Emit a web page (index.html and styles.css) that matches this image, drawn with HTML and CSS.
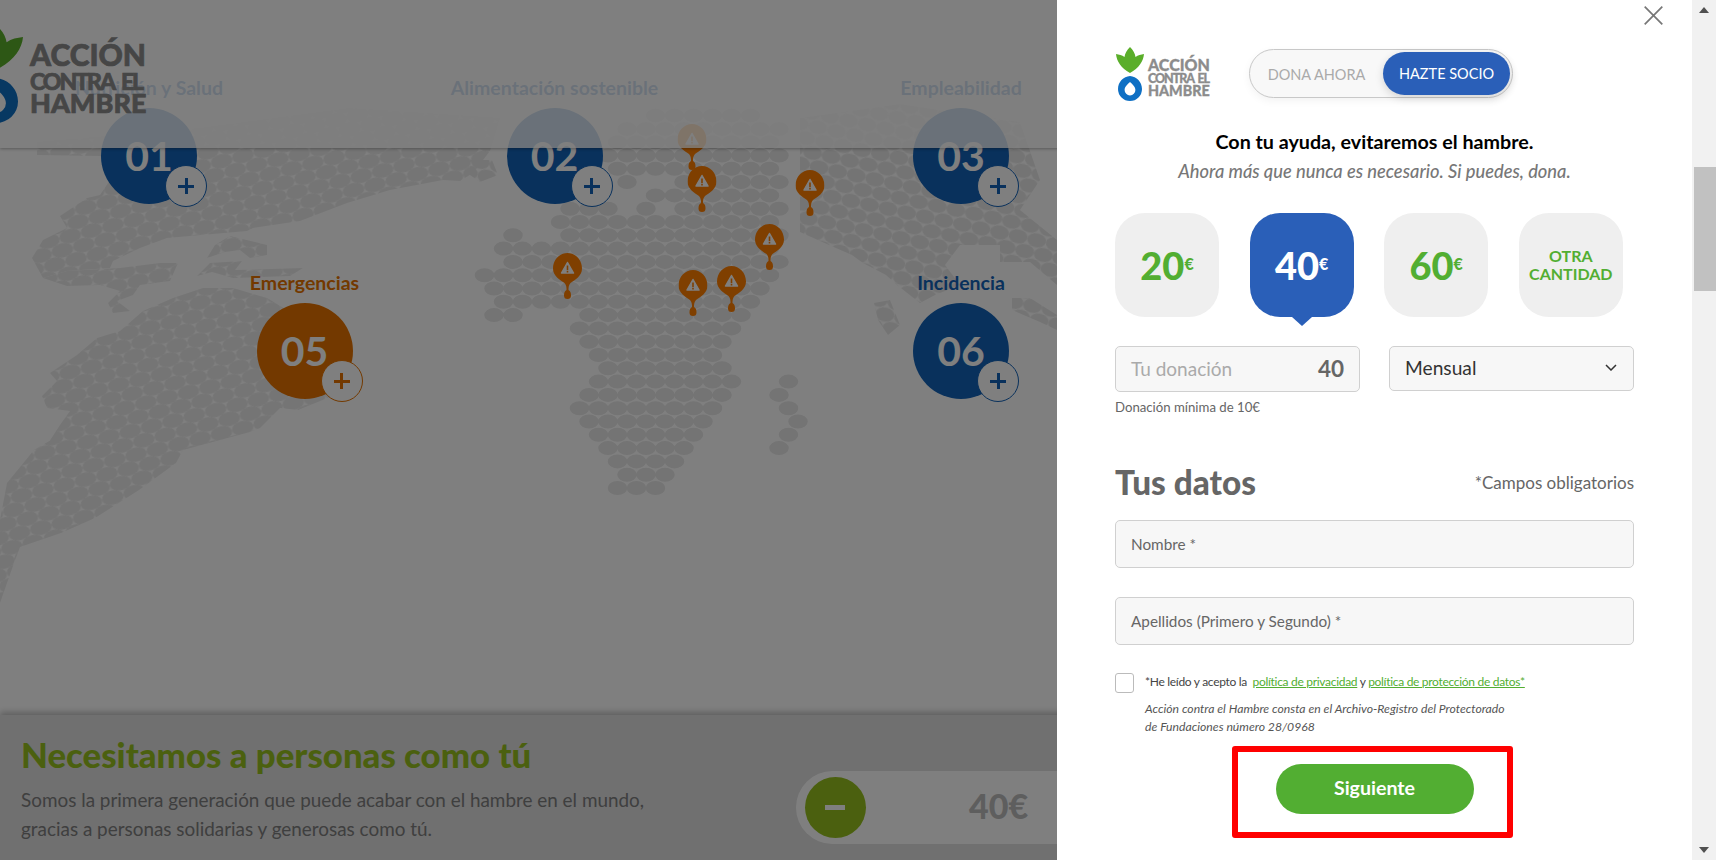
FILE: index.html
```html
<!DOCTYPE html>
<html lang="es">
<head>
<meta charset="utf-8">
<title>Acción contra el Hambre</title>
<link rel="stylesheet" href="styles.css">
</head>
<body>
<svg class="sprites" width="0" height="0" aria-hidden="true">
  <symbol id="leaf" viewBox="0 0 28 26" preserveAspectRatio="none">
    <path d="M14 0C17 3 19 6 19.500 10C22 8 25 7.500 28 7C27.500 14 23 21 14 26C5 21 .5 14 0 7C3 7.500 6 8 8.500 10C9 6 11 3 14 0Z"/>
  </symbol>
  <symbol id="ring" viewBox="0 0 24 25" preserveAspectRatio="none">
    <path fill-rule="evenodd" d="M12 0C18.600 .5 24 6 24 13A12 12 0 0 1 0 13C0 6 5.400 .5 12 0ZM12 6C10 8 6.600 10.500 6.600 14A5.400 5.400 0 0 0 17.400 14C17.400 10.500 14 8 12 6Z"/>
  </symbol>
  <symbol id="pin" viewBox="0 0 29 46">
    <path class="pin-body" d="M14.500 0C6.500 0 0 7 0 15.500C0 23 7 27 11.500 30C13.500 32 13.500 35 13.500 37C11.500 38 11 40 11 42.500A3.500 3.500 0 0 0 18 42.500C18 40 17.500 38 15.500 37C15.500 35 15.500 32 17.500 30C22 27 29 23 29 15.500C29 7 22.500 0 14.500 0Z"/>
    <path class="pin-mark" d="M14.500 9.500L20.500 20H8.500Z"/>
    <path class="pin-bang" d="M13.700 12.500H15.300V17H13.700ZM13.700 17.800H15.300V19.400H13.700Z"/>
  </symbol>
</svg>

<div class="page">
  <svg class="map" viewBox="0 0 1057 715" aria-hidden="true">
    <defs>
      <pattern id="dots-l" width="22" height="24" patternUnits="userSpaceOnUse" patternTransform="rotate(-14)">
        <ellipse cx="11" cy="6" rx="11" ry="7"/>
        <ellipse cx="11" cy="30" rx="11" ry="7"/>
        <ellipse cx="0" cy="18" rx="11" ry="7"/>
        <ellipse cx="22" cy="18" rx="11" ry="7"/>
        <ellipse cx="0" cy="-6" rx="11" ry="7"/>
        <ellipse cx="22" cy="-6" rx="11" ry="7"/>
      </pattern>
      <pattern id="dots-r" width="19" height="26" patternUnits="userSpaceOnUse" patternTransform="rotate(12)">
        <ellipse cx="9.500" cy="6.500" rx="9.500" ry="7"/>
        <ellipse cx="9.500" cy="32.500" rx="9.500" ry="7"/>
        <ellipse cx="0" cy="19.500" rx="9.500" ry="7"/>
        <ellipse cx="19" cy="19.500" rx="9.500" ry="7"/>
        <ellipse cx="0" cy="-6.500" rx="9.500" ry="7"/>
        <ellipse cx="19" cy="-6.500" rx="9.500" ry="7"/>
      </pattern>
    </defs>
    <g class="land-l">
      <polygon points="37,142 200,128 350,108 500,118 490,151 473,173 460,181 443,180 390,190 347,203 300,221 253,228 247,231 167,238 140,248 113,261 110,268 67,271 43,278 32,258 43,240 67,228 60,216 87,198 100,195 120,165 100,156 37,155"/>
      <polygon points="43,278 67,271 120,268 160,263 178,263 170,281 140,285 133,295 117,301 130,311 113,313 108,303 120,291 100,285 67,286"/>
      <polygon points="207,258 215,245 230,236 267,245 267,255 250,258 240,250 225,252"/>
      <polygon points="197,276 210,263 242,261 235,270 303,268 290,276 233,278 212,272"/>
      <polygon points="203,288 233,288 267,298 320,330 335,395 298,410 280,408 260,428 250,432 183,450 176,463 139,490 95,518 61,533 20,547 14,563 0,603 0,520 7,483 34,450 68,430 47,445 60,425 70,411 47,408 42,396 57,381 50,373 77,355 97,338 120,331 143,311 173,298"/>
    </g>
    <g class="land-c">
      <path transform="translate(0 115.600) scale(1 .72)" d="M655.500 0H769.500"/>
      <path transform="translate(0 129) scale(1 .72)" d="M627 0H798"/>
      <path transform="translate(0 142.200) scale(1 .72)" d="M617.500 0H788.500"/>
      <path transform="translate(0 155.500) scale(1 .72)" d="M608 0H798"/>
      <path transform="translate(0 168.800) scale(1 .72)" d="M617.500 0H788.500"/>
      <path transform="translate(0 182) scale(1 .72)" d="M627 0H646M684 0H798"/>
      <path transform="translate(0 195.400) scale(1 .72)" d="M655.500 0H788.500"/>
      <path transform="translate(0 208.700) scale(1 .72)" d="M570 0H627M646 0H647M684 0H798"/>
      <path transform="translate(0 222) scale(1 .72)" d="M560.500 0H788.500"/>
      <path transform="translate(0 235.300) scale(1 .72)" d="M513 0H532M570 0H798"/>
      <path transform="translate(0 248.600) scale(1 .72)" d="M503.500 0H788.500"/>
      <path transform="translate(0 261.900) scale(1 .72)" d="M513 0H798"/>
      <path transform="translate(0 275.200) scale(1 .72)" d="M484.500 0H788.500"/>
      <path transform="translate(0 288.500) scale(1 .72)" d="M494 0H779"/>
      <path transform="translate(0 301.800) scale(1 .72)" d="M503.500 0H769.500"/>
      <path transform="translate(0 315.100) scale(1 .72)" d="M494 0H532M589 0H760"/>
      <path transform="translate(0 328.400) scale(1 .72)" d="M579.500 0H750.500"/>
      <path transform="translate(0 341.700) scale(1 .72)" d="M589 0H741"/>
      <path transform="translate(0 355) scale(1 .72)" d="M598.500 0H731.500"/>
      <path transform="translate(0 368.300) scale(1 .72)" d="M608 0H741"/>
      <path transform="translate(0 381.600) scale(1 .72)" d="M598.500 0H750.500M788.500 0H789"/>
      <path transform="translate(0 394.900) scale(1 .72)" d="M589 0H741M779 0H798"/>
      <path transform="translate(0 408.200) scale(1 .72)" d="M579.500 0H731.500M788.500 0H807.500"/>
      <path transform="translate(0 421.500) scale(1 .72)" d="M589 0H722M798 0H799"/>
      <path transform="translate(0 434.800) scale(1 .72)" d="M598.500 0H712.500M788.500 0H789"/>
      <path transform="translate(0 448.100) scale(1 .72)" d="M608 0H703M779 0H798"/>
      <path transform="translate(0 461.400) scale(1 .72)" d="M617.500 0H693.500"/>
      <path transform="translate(0 474.700) scale(1 .72)" d="M627 0H684"/>
      <path transform="translate(0 488) scale(1 .72)" d="M617.500 0H674.500"/>
    </g>
    <g class="land-r">
      <polygon points="800,118 900,104 1020,122 1040,180 1020,210 1057,240 1057,285 1030,262 1000,262 1000,245 960,245 945,265 960,285 935,295 920,303 897,285 886,275 863,263 852,255 829,245 800,232"/>
      <polygon points="874,303 890,300 900,325 888,335 878,320"/>
      <polygon points="1012,298 1030,298 1057,315 1057,330 1040,322 1012,310"/>
      <polygon points="470,160 492,160 498,175 480,182 470,175"/>
    </g>
    <g class="pins">
      <use href="#pin" x="677.500" y="124" width="29" height="46"/>
      <use href="#pin" x="687.500" y="166" width="29" height="46"/>
      <use href="#pin" x="795.500" y="170" width="29" height="46"/>
      <use href="#pin" x="755" y="224" width="29" height="46"/>
      <use href="#pin" x="553" y="253" width="29" height="46"/>
      <use href="#pin" x="678.500" y="270" width="29" height="46"/>
      <use href="#pin" x="717" y="266" width="29" height="46"/>
    </g>
  </svg>

  <div class="node node-1"><span class="node-label">Nutrición y Salud</span><div class="node-dot"><span>01</span><i class="node-plus"></i></div></div>
  <div class="node node-2"><span class="node-label">Alimentación sostenible</span><div class="node-dot"><span>02</span><i class="node-plus"></i></div></div>
  <div class="node node-3"><span class="node-label">Empleabilidad</span><div class="node-dot"><span>03</span><i class="node-plus"></i></div></div>
  <div class="node node-5 node-orange"><span class="node-label">Emergencias</span><div class="node-dot"><span>05</span><i class="node-plus"></i></div></div>
  <div class="node node-6"><span class="node-label">Incidencia</span><div class="node-dot"><span>06</span><i class="node-plus"></i></div></div>

  <header class="site-header">
    <div class="logo logo-big">
      <div class="logo-mark">
        <svg class="logo-leaf"><use href="#leaf"/></svg>
        <svg class="logo-ring"><use href="#ring"/></svg>
      </div>
      <div class="logo-text"><b>ACCIÓN</b><b>CONTRA EL</b><b>HAMBRE</b></div>
    </div>
  </header>

  <footer class="site-footer">
    <div class="footer-copy">
      <h2>Necesitamos a personas como tú</h2>
      <p>Somos la primera generación que puede acabar con el hambre en el mundo,<br>gracias a personas solidarias y generosas como tú.</p>
    </div>
    <div class="stepper">
      <span class="stepper-minus"></span>
      <span class="stepper-value">40€</span>
    </div>
  </footer>

  <div class="scrim"></div>

  <aside class="panel">
    <div class="panel-body">
      <button class="close" aria-label="Cerrar">
        <svg viewBox="0 0 19 19"><path d="M.7.7L18.300 18.300M18.300.7L.7 18.300"/></svg>
      </button>

      <div class="brand-row">
        <div class="logo logo-small">
          <div class="logo-mark">
            <svg class="logo-leaf"><use href="#leaf"/></svg>
            <svg class="logo-ring"><use href="#ring"/></svg>
          </div>
          <div class="logo-text"><b>ACCIÓN</b><b>CONTRA EL</b><b>HAMBRE</b></div>
        </div>
        <div class="switch">
          <span class="switch-off">DONA AHORA</span>
          <span class="switch-on">HAZTE SOCIO</span>
        </div>
      </div>

      <h1 class="lead">Con tu ayuda, evitaremos el hambre.</h1>
      <p class="sublead">Ahora más que nunca es necesario. Si puedes, dona.</p>

      <div class="amounts">
        <div class="amount"><strong>20</strong><em>€</em></div>
        <div class="amount amount-active"><strong>40</strong><em>€</em></div>
        <div class="amount"><strong>60</strong><em>€</em></div>
        <div class="amount amount-other">OTRA<br>CANTIDAD</div>
      </div>

      <div class="donation-row">
        <div class="field field-amount"><span>Tu donación</span><b>40</b></div>
        <div class="field field-select"><span>Mensual</span>
          <svg viewBox="0 0 12 7"><path d="M1 1L6 6L11 1"/></svg>
        </div>
      </div>
      <p class="hint">Donación mínima de 10€</p>

      <div class="data-head">
        <h2>Tus datos</h2>
        <span>*Campos obligatorios</span>
      </div>

      <div class="field field-text">Nombre *</div>
      <div class="field field-text field-gap">Apellidos (Primero y Segundo) *</div>

      <div class="consent">
        <span class="check"></span>
        <div class="consent-text">
          <p class="consent-line">*He leído y acepto la &nbsp;<a>política de privacidad</a> y <a>política de protección de datos*</a></p>
          <p class="consent-note">Acción contra el Hambre consta en el Archivo-Registro del Protectorado<br>de Fundaciones número 28/0968</p>
        </div>
      </div>

      <div class="cta">
        <button class="next">Siguiente</button>
        <span class="cta-mark"></span>
      </div>
    </div>

    <div class="scrollbar">
      <span class="arrow-up"></span>
      <span class="thumb"></span>
      <span class="arrow-down"></span>
    </div>
  </aside>
</div>
</body>
</html>
```
FILE: styles.css
```css
* { box-sizing: border-box; }
html, body { margin: 0; height: 100%; overflow: hidden; }
body { font-family: Lato, "Liberation Sans", sans-serif; background: #fff; }
h1, h2, p { margin: 0; }
button { font-family: inherit; border: 0; padding: 0; background: none; }

.sprites { position: absolute; }
.page { position: relative; width: 1716px; height: 860px; overflow: hidden; background: #fff; }

/* world map */
.map { position: absolute; left: 0; top: 0; width: 1057px; height: 715px; }
#dots-l ellipse { fill: #ebebeb; }
#dots-r ellipse { fill: #e9e9e9; }
.land-l polygon { fill: url(#dots-l); }
.land-r polygon { fill: url(#dots-r); }
.land-c path { fill: none; stroke: #e8e8e8; stroke-width: 19.500; stroke-dasharray: 0 19; stroke-linecap: round; }
.pin-body { fill: #ff7f00; }
.pin-mark { fill: #fff; stroke: #fff; stroke-width: 1.500; stroke-linejoin: round; }
.pin-bang { fill: #ff7f00; }

/* nodes on the map */
.node { position: absolute; width: 240px; display: flex; flex-direction: column; align-items: center; color: #1262b8; }
.node-1 { left: 29px; top: 76px; }
.node-2 { left: 434.500px; top: 76px; }
.node-3 { left: 841px; top: 76px; }
.node-5 { left: 184.500px; top: 271px; }
.node-6 { left: 841px; top: 271px; }
.node-orange { color: #e67300; }
.node-label { font-size: 19.500px; font-weight: 700; line-height: 24px; margin-bottom: 8px; white-space: nowrap; }
.node-dot { position: relative; width: 96px; height: 96px; border-radius: 50%; background: currentColor; display: flex; align-items: center; justify-content: center; padding-bottom: 1px; }
.node-dot span { color: #fff; font-size: 41px; font-weight: 700; line-height: 1; }
.node-plus { position: absolute; left: 64px; top: 57px; width: 42px; height: 42px; border-radius: 50%; background: #fff; border: 1px solid currentColor; }
.node-plus::before, .node-plus::after { content: ""; position: absolute; background: currentColor; }
.node-plus::before { left: 12px; top: 18.500px; width: 16px; height: 3px; }
.node-plus::after { left: 18.500px; top: 12px; width: 3px; height: 16px; }

/* header */
.site-header { position: absolute; left: 0; top: 0; width: 100%; height: 148px; background: rgba(255, 255, 255, .82); box-shadow: 0 1px 3px rgba(0, 0, 0, .3); padding-top: 25px; }

.logo { display: flex; color: #8c8c8c; }
.logo-mark { display: flex; flex-direction: column; align-items: center; flex: none; }
.logo-text { display: flex; flex-direction: column; }
.logo-text b { font-weight: 900; white-space: nowrap; display: block; }
.logo-leaf { fill: #5aae2a; display: block; }
.logo-ring { fill: #0f70c4; display: block; }

.logo-big { margin-left: -32px; }
.logo-big .logo-mark { width: 56px; }
.logo-big .logo-leaf { width: 54px; height: 45px; }
.logo-big .logo-ring { width: 44px; height: 45px; margin-top: 8px; }
.logo-big .logo-text { margin-left: 6px; padding-top: 14px; -webkit-text-stroke: .7px #8c8c8c; }
.logo-big .logo-text b:nth-child(1) { font-size: 30px; line-height: 31px; }
.logo-big .logo-text b:nth-child(2) { font-size: 23px; line-height: 23px; letter-spacing: -2px; word-spacing: 4px; }
.logo-big .logo-text b:nth-child(3) { font-size: 27px; line-height: 24px; margin-top: -2px; }

.logo-small { width: 133px; margin-left: 1px; flex: none; }
.logo-small .logo-mark { width: 28px; }
.logo-small .logo-leaf { width: 28px; height: 26px; }
.logo-small .logo-ring { width: 24px; height: 25px; margin-top: 3px; }
.logo-small .logo-text { margin-left: 4px; padding-top: 9px; -webkit-text-stroke: .3px #8c8c8c; }
.logo-small .logo-text b:nth-child(1) { font-size: 16px; line-height: 17px; }
.logo-small .logo-text b:nth-child(2) { font-size: 12.500px; line-height: 12px; letter-spacing: -1.050px; word-spacing: 2px; }
.logo-small .logo-text b:nth-child(3) { font-size: 14.300px; line-height: 14px; margin-top: -1px; }

/* footer */
.site-footer { position: absolute; left: 0; bottom: 0; width: 100%; height: 145px; background: #e0e0e0; box-shadow: 0 -3px 6px rgba(0, 0, 0, .25); display: flex; padding-left: 21px; }
.footer-copy { width: 775px; flex: none; color: #7e7e7e; }
.footer-copy h2 { font-size: 34.800px; font-weight: 900; line-height: 42px; margin-top: 19px; color: #96c11f; white-space: nowrap; }
.footer-copy p { font-size: 18.900px; line-height: 29px; margin-top: 9px; }
.stepper { margin-top: 56px; width: 420px; height: 73px; border-radius: 37px; background: #fff; display: flex; align-items: center; padding-left: 9px; }
.stepper-minus { position: relative; width: 61px; height: 61px; border-radius: 50%; background: #96c11f; flex: none; }
.stepper-minus::before { content: ""; position: absolute; left: 20px; top: 28px; width: 20px; height: 5px; background: #fff; }
.stepper-value { margin-left: 103px; margin-bottom: 3px; font-size: 34px; font-weight: 900; color: #bcbcbc; line-height: 1; }

.scrim { position: absolute; inset: 0; background: rgba(0, 0, 0, .5); }

/* donation panel */
.panel { position: absolute; top: 0; right: 0; width: 659px; height: 860px; background: #fff; display: flex; color: #666; }
.panel-body { position: relative; flex: 1; padding: 47px 58px 0; min-width: 0; }
.close { position: absolute; left: 587px; top: 6px; width: 19px; height: 19px; }
.close svg { display: block; width: 19px; height: 19px; fill: none; stroke: #777; stroke-width: 1.700; }

.brand-row { display: flex; align-items: flex-start; height: 54px; }
.switch { width: 264px; height: 49px; margin-top: 2px; border: 1px solid #c8c8c8; border-radius: 25px; background: #f8f8f8; display: flex; align-items: center; padding: 3px 2px 3px 0; font-size: 14.500px; box-shadow: 0 3px 8px rgba(0, 0, 0, .05); }
.switch-off { flex: 1; text-align: center; color: #aaa; padding-top: 1px; }
.switch-on { width: 127px; height: 43px; border-radius: 22px; background: #2a5fb8; color: #fff; display: flex; align-items: center; justify-content: center; box-shadow: 0 3px 8px rgba(0, 0, 0, .15); }

.lead { margin-top: 29px; font-size: 19.700px; font-weight: 700; line-height: 24px; color: #000; text-align: center; }
.sublead { margin-top: 5px; font-size: 18.300px; font-style: italic; font-weight: 500; line-height: 24px; color: #777; text-align: center; }

.amounts { margin-top: 30px; display: flex; gap: 30.600px; }
.amount { position: relative; width: 104px; height: 104px; border-radius: 30px; background: #efefef; color: #52ae32; display: flex; align-items: center; justify-content: center; }
.amount strong { font-size: 38px; font-weight: 900; line-height: 1; }
.amount em { font-style: normal; font-size: 16px; font-weight: 900; margin-bottom: 4px; }
.amount-active { background: #2a5fb8; color: #fff; }
.amount-active::after { content: ""; position: absolute; left: 42px; bottom: -9px; border: 10px solid transparent; border-top: 9px solid #2a5fb8; border-bottom: 0; }
.amount-other { font-size: 16px; font-weight: 700; line-height: 18px; text-align: center; }

.donation-row { margin-top: 29px; display: flex; justify-content: space-between; align-items: flex-start; }
.field { background: #f7f7f7; border: 1px solid #d0d0d0; border-radius: 5px; display: flex; align-items: center; padding: 0 15px; }
.field-amount { width: 245px; height: 46px; justify-content: space-between; font-size: 19px; color: #aaa; padding-bottom: 1px; }
.field-amount b { font-size: 22.500px; font-weight: 700; color: #666; }
.field-select { width: 245px; height: 45px; justify-content: space-between; font-size: 19.200px; color: #333; padding-bottom: 2px; }
.field-select svg { width: 12px; height: 7px; fill: none; stroke: #333; stroke-width: 1.500; margin-right: 1px; }
.hint { margin-top: 7px; font-size: 13.200px; line-height: 16px; color: #666; }

.data-head { margin-top: 47px; display: flex; justify-content: space-between; align-items: center; height: 40px; }
.data-head h2 { font-size: 33.300px; font-weight: 900; color: #666; line-height: 40px; }
.data-head span { font-size: 17px; color: #666; font-weight: 400; }

.field-text { margin-top: 18px; height: 48px; font-size: 15.300px; color: #666; }
.field-gap { margin-top: 29px; }

.consent { margin-top: 28px; display: flex; align-items: flex-start; }
.check { width: 19px; height: 20px; flex: none; border: 1px solid #bbb; border-radius: 3px; background: #fff; margin-right: 11px; }
.consent-line { font-size: 12px; line-height: 18px; color: #444; white-space: nowrap; letter-spacing: -.3px; }
.consent-line a { color: #52ae32; text-decoration: underline; }
.consent-note { margin-top: 9px; font-size: 12.200px; font-style: italic; line-height: 18px; color: #555; white-space: nowrap; }

.cta { position: relative; margin-top: 28px; display: flex; justify-content: center; }
.next { width: 198px; height: 50px; border-radius: 25px; background: #52ae32; color: #fff; font-size: 19.600px; font-weight: 700; padding-bottom: 3px; }
.cta-mark { position: absolute; left: 117px; top: -18px; width: 281px; height: 92px; border: 6px solid #f00; border-radius: 3px; pointer-events: none; }

/* scrollbar */
.scrollbar { width: 24px; flex: none; background: #f1f1f1; display: flex; flex-direction: column; align-items: flex-end; }
.arrow-up, .arrow-down { width: 0; height: 0; border: 5px solid transparent; align-self: center; }
.arrow-up { margin-top: 7px; border-bottom: 6px solid #505050; border-top: 0; }
.arrow-down { margin-top: auto; margin-bottom: 7px; border-top: 6px solid #505050; border-bottom: 0; }
.thumb { margin-top: 154px; width: 22px; height: 124px; background: #c1c1c1; }
```
